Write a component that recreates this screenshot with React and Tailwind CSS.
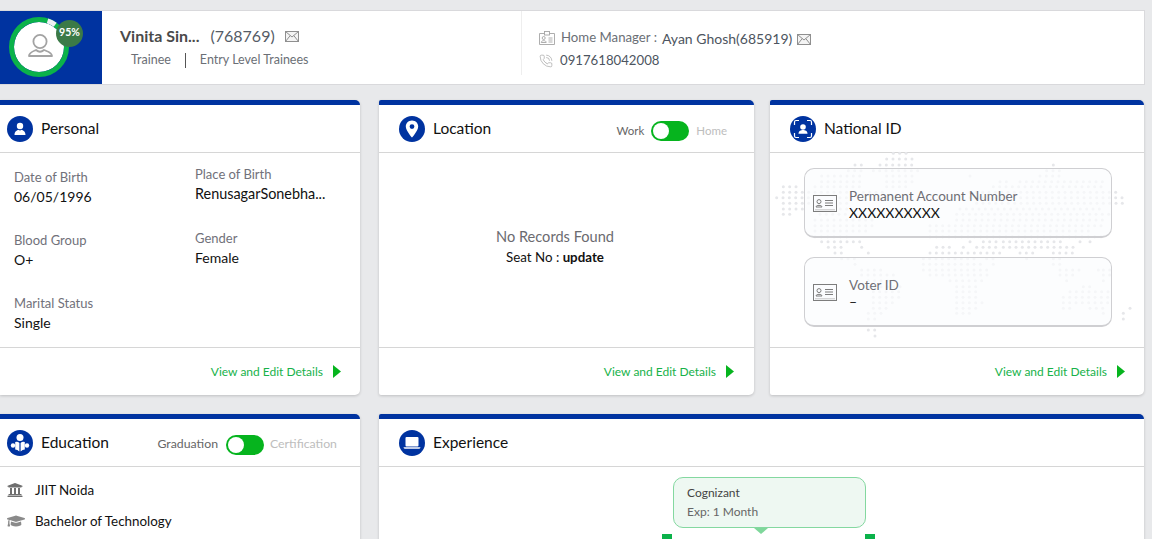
import React from "react";
import { FaUniversity, FaGraduationCap } from "react-icons/fa";
import { PhoneCall } from "lucide-react";

const font = "font-['Lato','Noto_Sans',sans-serif]";

const MAP = [
  [175,[[370,410]]],[192,[[350,430]]],[210,[[255,280],[330,430],[850,850]]],
  [227,[[235,280],[310,450],[830,870]]],[243,[[155,280],[350,430],[600,600],[810,870]]],
  [260,[[155,280],[350,430],[690,720],[750,1000]]],[275,[[40,90],[135,280],[350,410],[670,1010]]],
  [292,[[40,240],[280,340],[600,1040]]],[308,[[20,240],[600,1060]]],[325,[[40,230],[620,1060]]],
  [342,[[40,110],[135,240],[570,1000]]],[358,[[40,60],[150,240],[560,1020]]],[375,[[135,320],[560,1000]]],
  [392,[[135,320],[480,1000]]],[408,[[135,300],[480,960]]],[425,[[135,240],[480,1000]]],
  [440,[[155,280],[600,600],[640,680],[700,880],[930,930],[960,960]]],
  [457,[[175,225],[275,275],[500,540],[580,580],[620,680],[700,910]]],
  [474,[[195,225],[295,295],[480,700],[750,790],[850,910]]],
  [491,[[215,260],[460,620],[650,680],[770,770],[850,870]]],
  [508,[[255,255],[460,640],[670,670],[850,870]]],
  [525,[[275,350],[460,660],[870,930],[985,985],[1000,1020]]],
  [540,[[275,380],[480,660],[870,910],[1000,1020]]],
  [557,[[295,380],[540,640],[890,890],[1000,1000]]],
  [575,[[295,395],[560,620],[940,960]]],
  [590,[[310,395],[560,620],[900,1020]]],
  [607,[[310,395],[560,620],[880,1020]]],
  [623,[[310,375],[560,640],[880,1020]]],
  [640,[[310,355],[560,620],[880,910],[960,1000],[1080,1080]]],
  [655,[[295,335],[560,600],[1000,1000],[1060,1060]]],
  [672,[[295,315],[1060,1060]]],
  [705,[[295,315]]],[723,[[315,315]]],
];

function DotMap() {
  const dots = [];
  MAP.forEach(([py, runs]) => {
    runs.forEach(([a, b]) => {
      for (let x = a; x <= b; x += 19) dots.push([x / 3, py / 3]);
    });
  });
  return (
    <svg className="absolute left-0 top-[-5px] pointer-events-none" width="374" height="200" viewBox="0 0 374 200">
      {dots.map(([x, y], i) => (
        <circle key={i} cx={x} cy={y - 53} r="1.5" fill="#e6e7ea" />
      ))}
    </svg>
  );
}

function Mail({ className }) {
  return (
    <svg className={className} width="14" height="11" viewBox="0 0 14 11" fill="none" stroke="#8f8f8f" strokeWidth="1">
      <rect x="0.5" y="0.5" width="13" height="10" fill="#f4f4f4" />
      <path d="M0.5 0.5 L7 6 L13.5 0.5 M0.5 10.5 L5.2 4.6 M13.5 10.5 L8.8 4.6" />
    </svg>
  );
}

function Circle({ children }) {
  return (
    <span className="w-[26px] h-[26px] rounded-full bg-[#0033a0] flex items-center justify-center shrink-0">
      {children}
    </span>
  );
}

const UserIcon = () => (
  <svg width="14" height="14" viewBox="0 0 14 14" fill="#fff">
    <circle cx="7" cy="4" r="3.2" />
    <path d="M1.5 13 C1.5 9.5 4 8.2 5.5 7.8 Q7 9 8.5 7.8 C10 8.2 12.5 9.5 12.5 13 Z" />
  </svg>
);
const PinIcon = () => (
  <svg width="14" height="18" viewBox="0 0 14 18">
    <path fillRule="evenodd" fill="#fff" d="M7 0.5 C3.2 0.5 0.8 3.3 0.8 6.4 C0.8 10.5 7 17.5 7 17.5 C7 17.5 13.2 10.5 13.2 6.4 C13.2 3.3 10.8 0.5 7 0.5 Z M7 4.2 A2.4 2.4 0 1 1 7 9 A2.4 2.4 0 1 1 7 4.2 Z" />
  </svg>
);
const FaceIdIcon = () => (
  <svg width="20" height="20" viewBox="0 0 20 20" fill="none">
    <path d="M1.5 6 V3 Q1.5 1.5 3 1.5 H6 M14 1.5 H17 Q18.5 1.5 18.5 3 V6 M18.5 14 V17 Q18.5 18.5 17 18.5 H14 M6 18.5 H3 Q1.5 18.5 1.5 17 V14" stroke="#fff" strokeWidth="1.2" />
    <circle cx="10" cy="8" r="2.8" fill="#fff" />
    <path d="M5.5 14.8 C5.5 12 8 11 10 11 C12 11 14.5 12 14.5 14.8 Z" fill="#fff" />
  </svg>
);
const ReaderIcon = () => (
  <svg width="20" height="20" viewBox="0 0 20 20" fill="#fff">
    <circle cx="10" cy="4.5" r="3.5" />
    <path d="M5.2 9 Q7.8 8.2 9.4 10 V18.4 Q7.4 16.4 5.2 16.4 Z M14.8 9 Q12.2 8.2 10.6 10 V18.4 Q12.6 16.4 14.8 16.4 Z" />
    <circle cx="3" cy="12.5" r="2.2" />
    <circle cx="17" cy="12.5" r="2.2" />
  </svg>
);
const LaptopIcon = () => (
  <svg width="18" height="14" viewBox="0 0 18 14" fill="#fff">
    <rect x="2.5" y="1" width="13" height="9.5" rx="1" />
    <path d="M0.5 11.2 H17.5 Q17.3 12.8 15.8 12.8 H2.2 Q0.7 12.8 0.5 11.2 Z" />
  </svg>
);

function IdCard() {
  return (
    <svg className="mt-[1px]" width="24" height="17" viewBox="0 0 24 17" fill="none" stroke="#7d7d7d">
      <rect x="0.5" y="0.5" width="23" height="16" fill="#fbfcfe" />
      <circle cx="6" cy="6.6" r="2" strokeWidth="1" />
      <path d="M3 12 C3 9.8 9 9.8 9 12 Z" strokeWidth="1" />
      <path d="M12 5.5 H20 M12 8 H20 M12 10.5 H20" strokeWidth="1" />
      <path d="M2 14.8 H22" stroke="#c5c5c5" strokeWidth="1" />
    </svg>
  );
}

function BadgeIcon() {
  return (
    <svg width="16" height="14" viewBox="0 0 16 14" fill="none" stroke="#a5a5a5" strokeWidth="0.9">
      <path d="M5.5 2.5 H0.5 V13.5 H15.5 V2.5 H10.5" />
      <rect x="5.5" y="0.5" width="5" height="3.5" />
      <circle cx="4.7" cy="7" r="1.5" />
      <path d="M2.2 11.5 C2.2 9 7.2 9 7.2 11.5 Z" />
      <path d="M9.5 7 H13.5 M9.5 9 H13.5 M9.5 11 H13.5" />
    </svg>
  );
}

function Toggle() {
  return (
    <span className="w-[38px] h-[20px] rounded-full bg-[#06b41e] p-[2px] flex shrink-0">
      <span className="w-[16px] h-[16px] rounded-full bg-white" />
    </span>
  );
}

function CardHead({ icon, title, right, className }) {
  return (
    <div className={`h-[48px] border-b border-[#d6d6d6] flex items-center justify-between ${className}`}>
      <div className="flex items-center gap-[8px]">
        {icon}
        <span className="text-[15.5px] text-[#111] leading-none">{title}</span>
      </div>
      {right}
    </div>
  );
}

function Footer({ className = "pr-[19px]" }) {
  return (
    <div className={`h-[48px] border-t border-[#d6d6d6] flex items-center justify-end gap-[10px] ${className}`}>
      <span className="text-[12px] text-[#17b24a] leading-none">View and Edit Details</span>
      <svg width="8" height="13" viewBox="0 0 8 13"><path d="M0 0 L8 6.5 L0 13 Z" fill="#06b41e" /></svg>
    </div>
  );
}

function Field({ label, value, valueClass = "text-[14px]" }) {
  return (
    <div>
      <div className="text-[13px] leading-[16px] text-[#71717a]">{label}</div>
      <div className={`leading-[18px] text-[#111] mt-[3px] ${valueClass}`}>{value}</div>
    </div>
  );
}

function Card({ className, children }) {
  return (
    <section className={`bg-white border-t-[5px] border-[#0033a0] rounded-r-[5px] shadow-[0_1px_3px_rgba(0,0,0,0.18)] relative flex flex-col ${className}`}>
      {children}
    </section>
  );
}

function IdBox({ label, value, className = "" }) {
  return (
    <div className={`relative h-[70px] ml-[34px] mr-[32px] rounded-[10px] border border-[#cfcfd2] border-b-2 bg-[#fbfcfe]/70 flex items-center pl-[8px] gap-[12px] ${className}`}>
      <IdCard />
      <div className="mt-[3px]">
        <div className="text-[13.5px] leading-[16px] text-[#6f6f75]">{label}</div>
        <div className="text-[14px] leading-[16px] text-[#111] mt-[1px]">{value}</div>
      </div>
    </div>
  );
}

export default function App() {
  return (
    <div className={`h-[539px] overflow-hidden bg-[#e8e9eb] pt-[10px] ${font}`}>
      <header className="w-[1145px] h-[75px] bg-white border-y border-r border-[#d9d9dc] flex">
        <div className="w-[102px] bg-[#0033a0] flex items-center pl-[9px] shrink-0">
          <div className="relative w-[60px] h-[60px] mb-[2px]">
            <svg width="60" height="60" viewBox="0 0 60 60" fill="none">
              <circle cx="30" cy="30" r="25" fill="#fff" />
              <circle cx="30" cy="30" r="27.5" stroke="#0bb24a" strokeWidth="5" />
              <path d="M38.5 3.85 A27.5 27.5 0 0 1 46.2 7.75" stroke="#eef0f5" strokeWidth="5" />
              <circle cx="31" cy="24.5" r="6.6" stroke="#a3a3a3" strokeWidth="1.8" />
              <path d="M20 39 C20 35.5 23.5 34.5 27 33 Q31 36.5 35 33 C38.5 34.5 43 35.5 43 39 Z" stroke="#a3a3a3" strokeWidth="1.8" strokeLinejoin="round" />
            </svg>
            <span className="absolute left-[47px] top-[3px] w-[27px] h-[27px] rounded-full bg-[#3b7a47] text-white text-[10.5px] font-bold flex items-center justify-center">95%</span>
          </div>
        </div>
        <div className="w-[419px] pl-[18px] pt-[14px] shrink-0">
          <div className="flex items-center h-[22px]">
            <span className="text-[16px] font-bold text-[#4a4a4a]">Vinita Sin...</span>
            <span className="text-[16px] text-[#555c66] ml-[11px]">(768769)</span>
            <Mail className="ml-[10px]" />
          </div>
          <div className="flex items-center text-[12.5px] text-[#6b6f76] mt-[5px] pl-[11px] h-[16px]">
            <span>Trainee</span>
            <span className="w-px h-[15px] bg-[#555] mx-[14px]" />
            <span>Entry Level Trainees</span>
          </div>
        </div>
        <div className="flex-1 h-[64px] border-l border-[#eeeeee] pl-[17px] pt-[17px]">
          <div className="flex items-center h-[20px]">
            <BadgeIcon />
            <span className="ml-[6px] text-[13.2px] text-[#6b6f76]">Home Manager :</span>
            <span className="ml-[5px] text-[14px] text-[#4d5560]">Ayan Ghosh(685919)</span>
            <Mail className="ml-[5px] mt-[2px]" />
          </div>
          <div className="flex items-center h-[20px] mt-[3px] text-[13.2px] text-[#4d5560]">
            <PhoneCall size={14} color="#a5a5a5" strokeWidth={1.2} />
            <span className="ml-[7px]">0917618042008</span>
          </div>
        </div>
      </header>

      <div className="flex mt-[15px]">
        <Card className="w-[360px] h-[295px]">
          <CardHead className="pl-[7px]" icon={<Circle><UserIcon /></Circle>} title="Personal" />
          <div className="flex-1 flex pl-[14px]">
            <div className="w-[181px] pt-[16px] flex flex-col gap-[26px]">
              <Field label="Date of Birth" value="06/05/1996" />
              <Field label="Blood Group" value="O+" />
              <Field label="Marital Status" value="Single" />
            </div>
            <div className="flex-1 pt-[13px] flex flex-col gap-[27px]">
              <Field label="Place of Birth" value="RenusagarSonebha..." valueClass="text-[14.4px]" />
              <Field label="Gender" value="Female" />
            </div>
          </div>
          <Footer />
        </Card>

        <Card className="w-[375px] h-[295px] ml-[19px] rounded-l-[2px]">
          <CardHead
            className="pl-[20px] pr-[27px]"
            icon={<Circle><PinIcon /></Circle>}
            title="Location"
            right={
              <div className="flex items-center text-[11.5px] pt-[5px]">
                <span className="text-[#666] mr-[7px]">Work</span>
                <Toggle />
                <span className="text-[#bdbdbd] ml-[7px]">Home</span>
              </div>
            }
          />
          <div className="flex-1 flex flex-col items-center pt-[75px] pr-[23px]">
            <div className="text-[14.6px] leading-[18px] text-[#6b6b70]">No Records Found</div>
            <div className="text-[13.3px] leading-[16px] text-[#111] mt-[3px]">Seat No : <b>update</b></div>
          </div>
          <Footer className="pr-[20px]" />
        </Card>

        <Card className="w-[374px] h-[295px] ml-[16px] rounded-l-[2px]">
          <CardHead className="pl-[20px]" icon={<Circle><FaceIdIcon /></Circle>} title="National ID" />
          <div className="flex-1 relative pt-[15px]">
            <DotMap />
            <IdBox label="Permanent Account Number" value="XXXXXXXXXX" />
            <IdBox label="Voter ID" value="–" className="mt-[19px]" />
          </div>
          <Footer />
        </Card>
      </div>

      <div className="flex mt-[19px]">
        <Card className="w-[360px] h-[300px]">
          <CardHead
            className="pl-[7px] pr-[23px]"
            icon={<Circle><ReaderIcon /></Circle>}
            title="Education"
            right={
              <div className="flex items-center text-[12.3px] pt-[4px]">
                <span className="text-[#666] mr-[8px]">Graduation</span>
                <Toggle />
                <span className="text-[#bdbdbd] ml-[6px]">Certification</span>
              </div>
            }
          />
          <div className="pl-[7px] pt-[13px] text-[13.4px] text-[#111]">
            <div className="flex items-center h-[20px]">
              <FaUniversity size={16} color="#6f6f6f" />
              <span className="ml-[12px]">JIIT Noida</span>
            </div>
            <div className="flex items-center h-[20px] mt-[11px]">
              <FaGraduationCap size={18} color="#8a8a8a" />
              <span className="ml-[10px]">Bachelor of Technology</span>
            </div>
          </div>
        </Card>

        <Card className="w-[765px] h-[300px] ml-[19px] rounded-l-[2px]">
          <CardHead className="pl-[20px]" icon={<Circle><LaptopIcon /></Circle>} title="Experience" />
          <div className="relative pt-[10px] pl-[294px]">
            <div className="w-[193px] h-[51px] rounded-[10px] border border-[#84d8a0] bg-[#eef8f2] pl-[13px] pt-[6px]">
              <div className="text-[12px] leading-[18px] text-[#444]">Cognizant</div>
              <div className="text-[12px] leading-[18px] text-[#666] mt-[1px]">Exp: 1 Month</div>
            </div>
            <div className="ml-[81px] w-0 h-0 border-x-[7px] border-x-transparent border-t-[6px] border-t-[#7fd79b]" />
            <div className="w-[213px] -ml-[11px] flex justify-between">
              <span className="w-[10px] h-[10px] bg-[#0bb24a]" />
              <span className="w-[10px] h-[10px] bg-[#0bb24a]" />
            </div>
          </div>
        </Card>
      </div>
    </div>
  );
}
